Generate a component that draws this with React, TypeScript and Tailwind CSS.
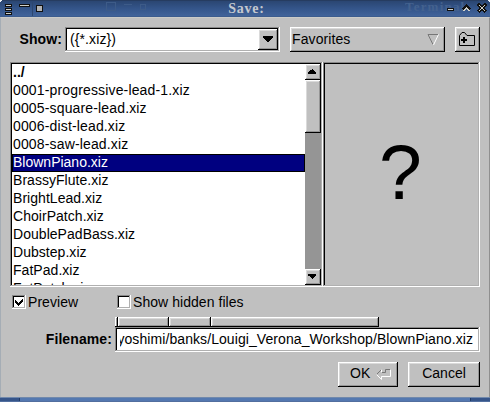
import type { ReactNode } from 'react';

const raised =
  'shadow-[inset_-1px_-1px_0_#000,inset_1px_1px_0_#fff,inset_-2px_-2px_0_#959595,inset_2px_2px_0_#dadada]';
const sunken =
  'shadow-[inset_-1px_-1px_0_#fff,inset_1px_1px_0_#888,inset_-2px_-2px_0_#b0b0b0,inset_2px_2px_0_#000]';

const files = [
  '0001-progressive-lead-1.xiz',
  '0005-square-lead.xiz',
  '0006-dist-lead.xiz',
  '0008-saw-lead.xiz',
  'BlownPiano.xiz',
  'BrassyFlute.xiz',
  'BrightLead.xiz',
  'ChoirPatch.xiz',
  'DoublePadBass.xiz',
  'Dubstep.xiz',
  'FatPad.xiz',
  'FatPatch.xiz',
];

function rowStyle(name: string) {
  if (name === 'BlownPiano.xiz') {
    return 'h-[18px] bg-[#000080] pl-px leading-[17px] text-white shadow-[inset_0_0_0_1px_#000]';
  }
  if (name.startsWith('0')) return 'h-[18px] pl-px leading-[17px] tracking-[0.15px]';
  return 'h-[18px] pl-px leading-[17px] tracking-[0.04px]';
}

function TitleBar() {
  return (
    <div className="relative flex h-[17px] w-full items-center justify-center overflow-hidden bg-linear-to-b from-[#29446f] via-[#34558a] to-[#43659c]">
      <span className="absolute left-[405px] top-0 font-['Liberation_Serif',serif] text-[13px] font-bold leading-[14px] tracking-[1.2px] text-[#44628f]">
        Terminal
      </span>
      <svg className="absolute inset-0" width="490" height="17" shapeRendering="crispEdges">
        <path d="M0 0h490v1H0z" fill="#263c60" />
        <path d="M0 16h490v1H0z" fill="#3c5c8e" />
        <path d="M32 2v14" stroke="#2c466f" />
        <path d="M0 0h2v1H1v1H0zM488 0h2v2h-1v-1h-1z" fill="#e8edf4" />
        <path d="M106.500 2.500h9v8h-9zM124 4h8M140 4h5v5h-5z" fill="none" stroke="#3d5b88" />
        <path d="M5 4h7v3H5zM5 8h7v3H5zM5 12h7v3H5zM19 4h11v3H19zM36 5h7v7h-7z" fill="#111" />
        <path d="M6 5h5v1H6zM6 9h5v1H6zM6 13h5v1H6zM20 5h9v1h-9z" fill="#d0d0c8" />
        <path d="M37 6h5v5h-5z" fill="#b4b4b4" />
        <path d="M447 8h7v3h-7z" fill="#111" />
        <path d="M448 9h5v1h-5z" fill="#d8d8d0" />
        <path d="M463 10l3.500-3.500L470 10" fill="none" stroke="#111" strokeWidth="4" />
        <path d="M463 10h1v-1h1v-1h1v-1h1v1h1v1h1v1h1v1h-2v-1h-1v-1h-1v1h-1v1h-2z" fill="#d0d0c8" />
        <path d="M478 4l8 8M486 4l-8 8" stroke="#111" strokeWidth="4" />
        <path d="M479 5l6 6M485 5l-6 6" stroke="#d0d0c8" strokeWidth="1.400" />
      </svg>
      <span className="relative ml-[3px] font-['Liberation_Serif',serif] text-[14px] font-bold leading-[16px] tracking-[0.8px] text-[#c4c8cf]">
        Save:
      </span>
    </div>
  );
}

function Check({ checked, children }: { checked?: boolean; children: ReactNode }) {
  return (
    <div className="flex h-[14px] items-center gap-[2px]">
      <span className={`h-[14px] w-[14px] bg-white ${sunken}`}>
        {checked && (
          <svg width="14" height="14" shapeRendering="crispEdges">
            <path d="M3 5v3l3 3 5-5V3L6 8z" fill="#000" />
          </svg>
        )}
      </span>
      <span className="whitespace-nowrap leading-[14px] tracking-[0.05px]">{children}</span>
    </div>
  );
}

function ScrollBar() {
  return (
    <div className="flex h-[221px] w-4 flex-col bg-[#959595]">
      <div className={`h-4 bg-[#c0c0c0] ${raised}`}>
        <svg width="16" height="16" shapeRendering="crispEdges">
          <path d="M7 5h1v1h1v1h1v1h1v2H3V8h1V7h1V6h2z" fill="#000" />
        </svg>
      </div>
      <div className={`h-[53px] bg-[#c0c0c0] ${raised}`} />
      <div className={`mt-auto h-4 bg-[#c0c0c0] ${raised}`}>
        <svg width="16" height="16" shapeRendering="crispEdges">
          <path d="M3 5h8v2h-1v1H9v1H8v1H7V9H6V8H5V7H3z" fill="#000" />
        </svg>
      </div>
    </div>
  );
}

export default function App() {
  return (
    <div className="flex h-[402px] w-[490px] flex-col overflow-hidden bg-[#c0c0c0] font-['Liberation_Sans',Arial,sans-serif] text-[14px] text-black">
      <TitleBar />
      <div className="flex h-[380px] flex-col border-l border-r border-t border-l-[#a5adb5] border-r-[#8f8f8f] border-t-[#cbcbc8] pl-[9px] pr-[9px] pt-[9px]">
        <div className="flex h-[25px]">
          <div className="w-[55px] pr-[3px] text-right font-bold leading-[24px] tracking-[0.1px]">Show:</div>
          <div className={`flex w-[215px] justify-between bg-white p-[2px] ${sunken}`}>
            <span className="pl-[3px] leading-[20px] tracking-[0.1px]">{'({*.xiz})'}</span>
            <div className={`h-[21px] w-5 bg-[#c0c0c0] ${raised}`}>
              <svg width="20" height="21" shapeRendering="crispEdges">
                <path d="M5 7h10v2h-1v1h-1v1h-1v1h-1v1H9v-1H8v-1H7v-1H6V9H5z" fill="#000" />
              </svg>
            </div>
          </div>
          <div className={`ml-[10px] flex w-[155px] justify-between pl-[2px] ${raised}`}>
            <span className="leading-[24px] tracking-[0.1px]">Favorites</span>
            <svg width="24" height="25">
              <path d="M12 17.500L7 7.500H17" fill="none" stroke="#777" />
              <path d="M17.500 7.500l-5 10.500" fill="none" stroke="#fff" />
            </svg>
          </div>
          <div className={`ml-[10px] w-[25px] ${raised}`}>
            <svg width="25" height="25">
              <path d="M4.500 18.500V8.500L7 5.500H9.500L12 8.500H19.500V18.500z" fill="none" stroke="#000" />
              <path d="M6 12h6v2H6zM8 10h2v6H8z" fill="#000" />
            </svg>
          </div>
        </div>

        <div className="mt-[10px] flex h-[225px]">
          <div className={`flex w-[313px] bg-white p-[2px] ${sunken}`}>
            <div className="h-[221px] w-[293px] overflow-hidden">
              <div className="h-[18px] pl-px font-bold leading-[17px]">../</div>
              {files.map((name) => (
                <div key={name} className={rowStyle(name)}>
                  {name}
                </div>
              ))}
            </div>
            <ScrollBar />
          </div>
          <div className={`flex w-[157px] items-center justify-center ${sunken}`}>
            <span className="mb-[5px] mr-[2px] text-[77px] leading-[77px]">?</span>
          </div>
        </div>

        <div className="mt-[8px] flex pl-[2px]">
          <div className="w-[105px]">
            <Check checked>Preview</Check>
          </div>
          <Check>Show hidden files</Check>
        </div>

        <div className="mt-[8px] flex h-[35px]">
          <div className="w-[105px] pr-[3px] pt-[11px] text-right font-bold leading-[22px] tracking-[0.1px]">Filename:</div>
          <div className="flex w-[365px] flex-col">
            <div className="flex h-[10px] w-[264px]">
              <div className={`w-[3px] ${raised}`} />
              <div className={`w-[51px] ${raised}`} />
              <div className={`w-[42px] ${raised}`} />
              <div className={`flex-1 ${raised}`} />
            </div>
            <div className={`h-[25px] bg-white px-[5px] py-[2px] ${sunken}`}>
              <div className="flex h-[21px] justify-end overflow-hidden whitespace-nowrap pr-[2px] leading-[20px] tracking-[0.08px]">
                yoshimi/banks/Louigi_Verona_Workshop/BlownPiano.xiz
              </div>
            </div>
          </div>
        </div>

        <div className="mt-[10px] flex justify-end gap-[10px]">
          <button className={`flex h-[25px] w-[60px] pl-[12px] leading-[23px] ${raised}`}>
            OK
            <svg className="ml-[5px]" width="18" height="25">
              <path d="M6.500 7.500L1.500 12.500M6.500 10.500h4v-3h5" fill="none" stroke="#777" />
              <path d="M1.500 12.500l5 5v-3h9v-7M6.500 7.500v3" fill="none" stroke="#fff" />
            </svg>
          </button>
          <button className={`flex h-[25px] w-[72px] justify-center leading-[23px] ${raised}`}>Cancel</button>
        </div>
      </div>
      <div className="flex h-[5px] border-b border-t border-b-[#526f9f] border-t-[#7189ac] bg-[#36558a]">
        <div className="w-5 border-r border-[#223c67] bg-[#36558a]" />
        <div className="flex-1 bg-[#5478b0]" />
        <div className="w-5 border-l border-[#223c67] bg-[#36558a]" />
      </div>
    </div>
  );
}
